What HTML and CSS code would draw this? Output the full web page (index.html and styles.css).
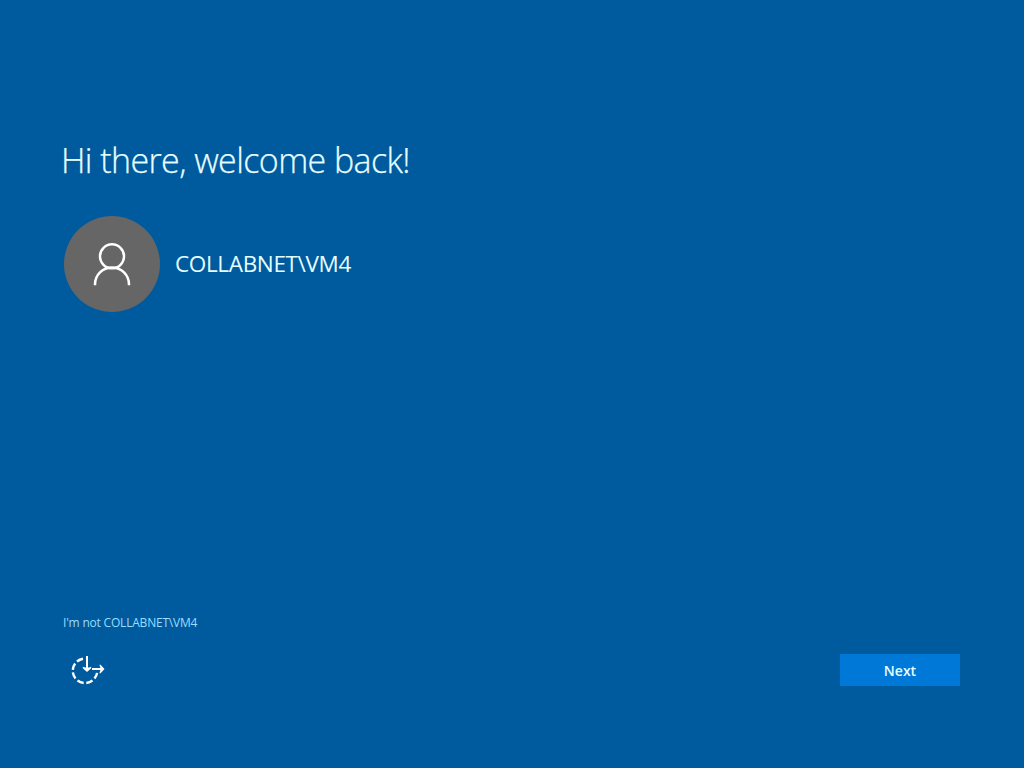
FILE: index.html
```html
<!DOCTYPE html>
<html lang="en">
<head>
<meta charset="utf-8">
<title>Welcome back</title>
<link rel="stylesheet" href="styles.css">
</head>
<body>
<main class="screen">
  <h1 class="title"><span>Hi there, welcome back!</span></h1>
  <section class="account">
    <svg class="avatar" viewBox="0 0 96 96" aria-hidden="true">
      <circle cx="48" cy="48" r="48" fill="#666"/>
      <g fill="none" stroke="#fff" stroke-width="2.5">
        <circle cx="48" cy="40.3" r="12"/>
        <path d="M31 69.3v-.8a17 17 0 0 1 34 0v.8"/>
      </g>
    </svg>
    <span class="account-name">COLLABNET\VM4</span>
  </section>
  <a class="switch-user"><span>I'm not COLLABNET\VM4</span></a>
  <footer class="actions">
    <svg class="ease" viewBox="0 0 36 32" role="img" aria-label="Ease of access" fill="none" stroke="#fff">
      <path stroke-width="2.4" stroke-dasharray="6.7 2.7" d="M13 4.7A12.26 12.26 0 1 0 27.1 18.9"/>
      <path stroke-width="2" d="M17 2v12M22 15h10"/>
      <path stroke="none" fill="#fff" d="M12.8 12.8L17 14l4.2-1.2v1.4L17 18l-4.2-3.8zM29.4 10.8h1.2l3.9 4.2-3.9 4.2h-1.2l1.3-4.2z"/>
    </svg>
    <button class="next">Next</button>
  </footer>
</main>
</body>
</html>
```
FILE: styles.css
```css
* { box-sizing: border-box; }
body {
  margin: 0;
  background: #005a9e;
  font-family: "Open Sans", "Noto Sans", sans-serif;
  color: #e6ffff;
}
.screen {
  display: flex;
  flex-direction: column;
  width: 1024px;
  height: 768px;
  padding: 136px 64px 82px;
}
.title {
  height: 50px;
  margin: 0 0 30px -3px;
  font-size: 34px;
  font-weight: 300;
  line-height: 49px;
  letter-spacing: -0.6px;
  white-space: nowrap;
  -webkit-text-stroke: 0.25px #e6ffff;
}
.account {
  display: flex;
  align-items: center;
  gap: 15px;
}
.avatar { width: 96px; height: 96px; }
.account-name {
  font-size: 22.5px;
  font-weight: 400;
  line-height: 32px;
  letter-spacing: -0.35px;
}
.switch-user {
  margin-top: auto;
  margin-left: -1px;
  font-size: 12px;
  line-height: 18px;
  letter-spacing: -0.2px;
  color: #99ddff;
}
.actions {
  display: flex;
  justify-content: space-between;
  height: 32px;
  margin-top: 22px;
}
.ease { width: 36px; height: 32px; margin-left: 6px; }
.next {
  width: 120px;
  height: 32px;
  padding: 1px 0 0;
  border: 0;
  background: #0078d7;
  color: #e6ffff;
  font: 600 14px/31px "Open Sans", "Noto Sans", sans-serif;
}
```
